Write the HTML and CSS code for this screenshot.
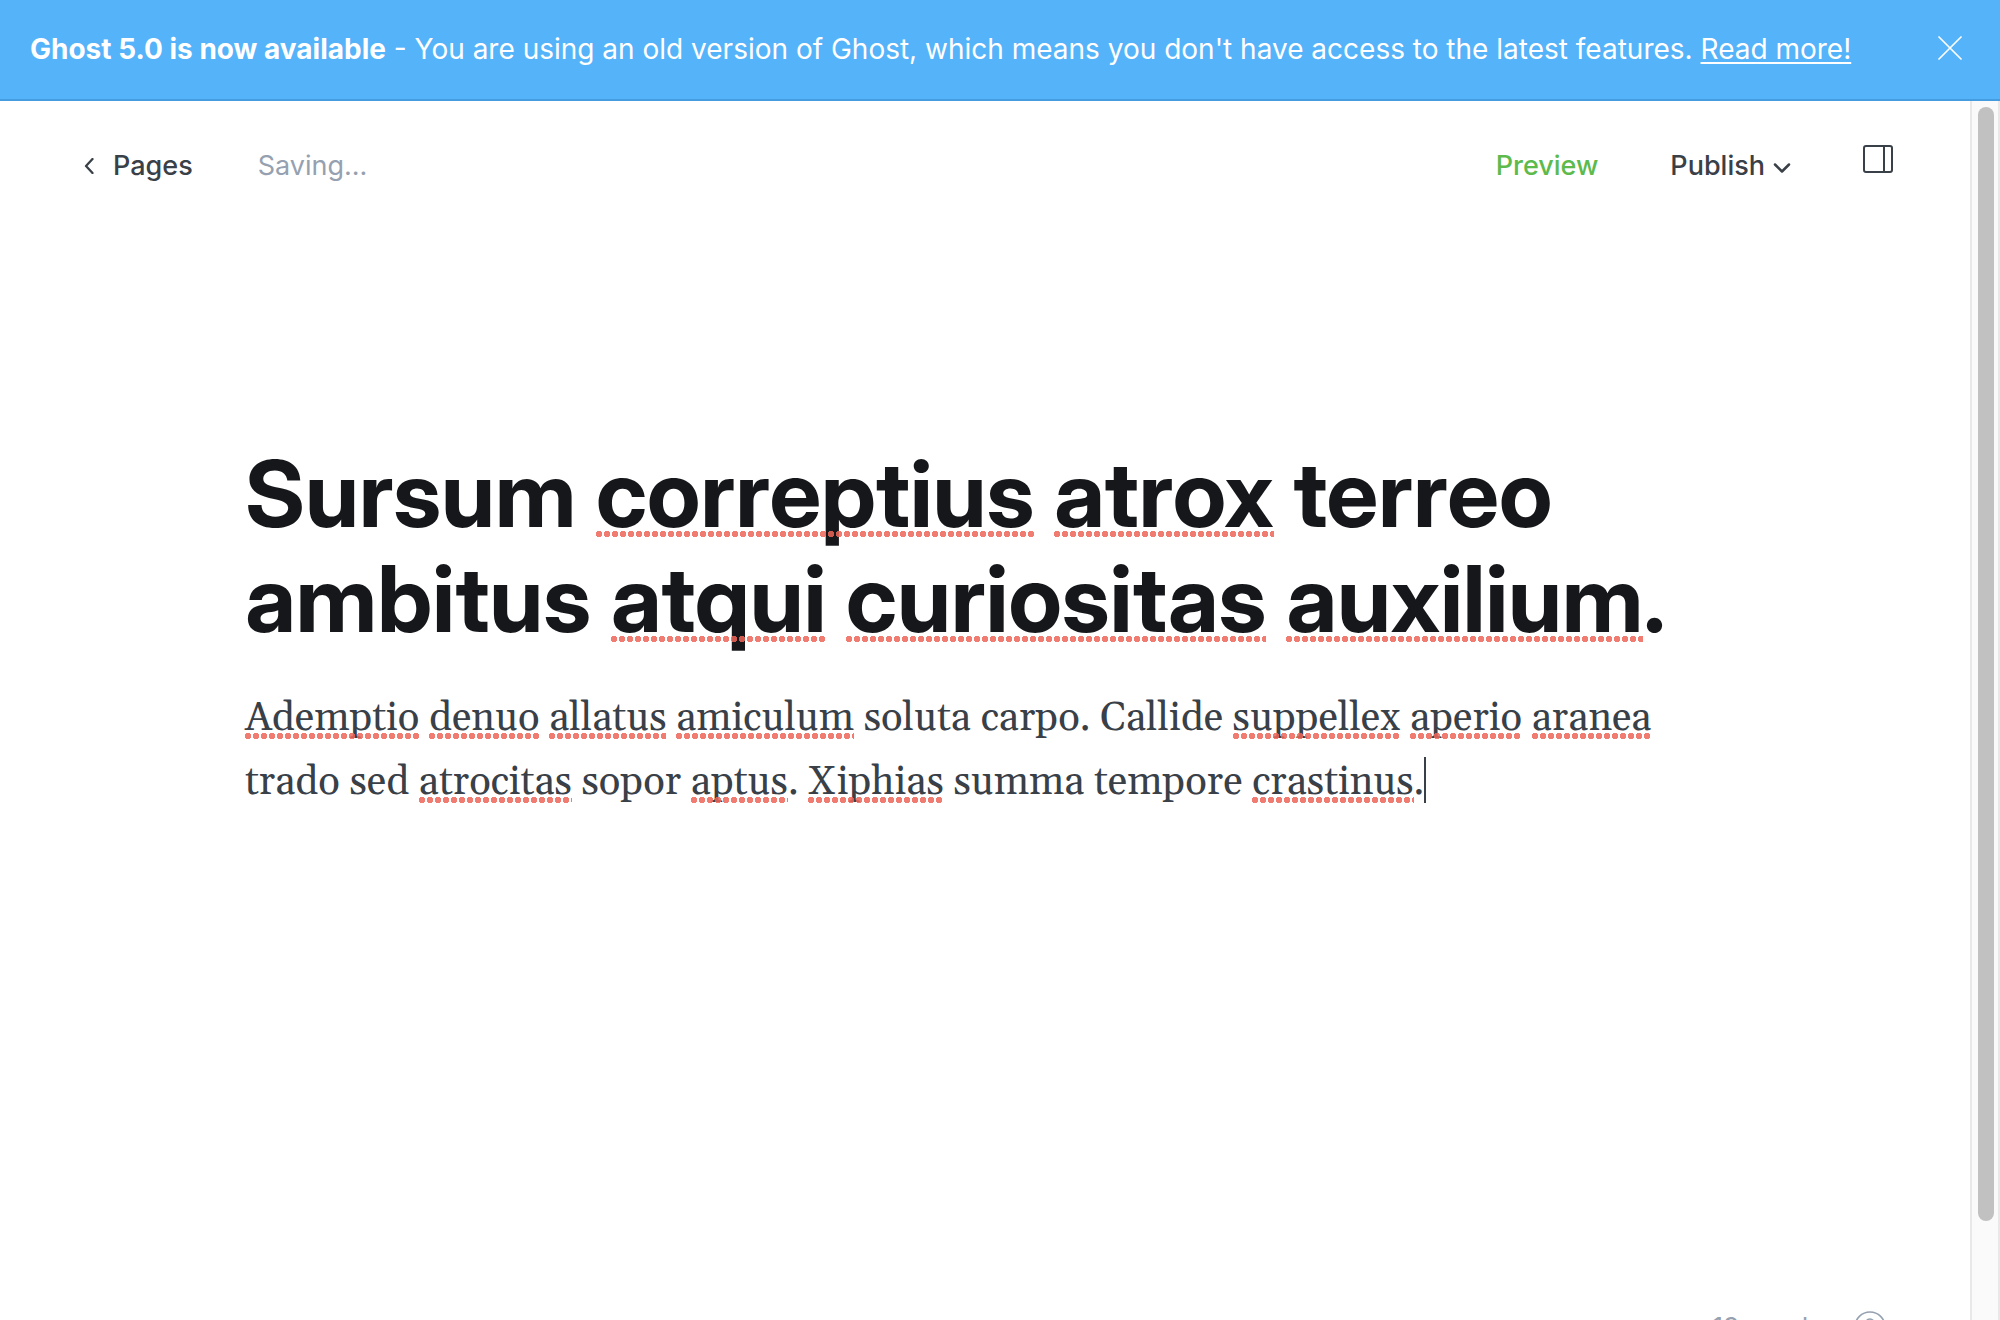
FILE: index.html
```html
<!DOCTYPE html>
<html lang="en">
<head>
<meta charset="utf-8">
<title>Page editor</title>
<link rel="stylesheet" href="styles.css">
</head>
<body>
<aside class="banner">
  <p class="banner-text"><strong>Ghost 5.0 is now available</strong> - You are using an old version of Ghost, which means you don't have access to the latest features. <a class="banner-link" href="#">Read more!</a></p>
  <button class="icon-button" type="button" aria-label="Close">
    <svg width="24" height="24" viewBox="0 0 24 24" fill="none" stroke="currentColor" stroke-width="1.7" stroke-linecap="round"><path d="M1 1l22 22M23 1L1 23"/></svg>
  </button>
</aside>
<div class="workspace">
  <main class="editor">
    <header class="toolbar">
      <a class="back" href="#">
        <svg width="10" height="16" viewBox="0 0 10 16" fill="none" stroke="currentColor" stroke-width="2.3" stroke-linecap="round" stroke-linejoin="round"><path d="M8.500 1L2 8l6.500 7"/></svg>
        Pages
      </a>
      <span class="status">Saving...</span>
      <nav class="actions">
        <button class="preview" type="button">Preview</button>
        <button class="publish" type="button">Publish
          <svg class="caret-icon" width="18" height="10" viewBox="0 0 18 10" fill="none" stroke="currentColor" stroke-width="2.500" stroke-linecap="round" stroke-linejoin="round"><path d="M2 1.500l7 7 7-7"/></svg>
        </button>
        <button class="icon-button settings" type="button" aria-label="Settings">
          <svg width="30" height="28" viewBox="0 0 30 28" fill="none" stroke="currentColor" stroke-width="2"><rect x="1" y="1" width="28" height="26" rx="2"/><path d="M21 1v26"/></svg>
        </button>
      </nav>
    </header>
    <article class="post">
      <h1 class="title">Sursum <span class="typo">correptius</span> <span class="typo">atrox</span> terreo<br>ambitus <span class="typo">atqui</span> <span class="typo">curiositas</span> <span class="typo">auxilium</span>.</h1>
      <p class="body-text"><span class="typo">Ademptio</span> <span class="typo">denuo</span> <span class="typo">allatus</span> <span class="typo">amiculum</span> soluta carpo. Callide <span class="typo">suppellex</span> <span class="typo">aperio</span> <span class="typo">aranea</span><br>trado sed <span class="typo">atrocitas</span> sopor <span class="typo">aptus</span>. <span class="typo">Xiphias</span> summa tempore <span class="typo">crastinus</span>.<span class="text-caret"></span></p>
    </article>
    <footer class="footer">
      <span>19 words</span>
      <svg width="32" height="32" viewBox="0 0 32 32" fill="none" stroke="currentColor" stroke-width="1.600" stroke-linecap="round"><circle cx="16" cy="16" r="15"/><path d="M12 12a4 4 0 1 1 6 3.500c-1.500 1-2 1.500-2 3.500M16 23v.2"/></svg>
    </footer>
  </main>
  <div class="scrollbar"><div class="thumb"></div></div>
</div>
</body>
</html>
```

FILE: styles.css
```css
* { box-sizing: border-box; }

body {
  margin: 0;
  height: 100vh;
  overflow: hidden;
  display: flex;
  flex-direction: column;
  background: #fff;
  color: #394047;
  font: 400 28px/40px Inter, "Liberation Sans", sans-serif;
}

button {
  margin: 0;
  padding: 0;
  border: 0;
  background: none;
  color: inherit;
  font: inherit;
}

svg { display: block; }

.banner {
  flex: none;
  display: flex;
  align-items: flex-start;
  justify-content: space-between;
  padding: 29px 38px 30px 30px;
  border-bottom: 2px solid #459cdf;
  background: #54b3f9;
  color: #fff;
}

.banner-text { margin: 0; white-space: nowrap; }
.banner-text strong { font-weight: 700; }
.banner .icon-button { padding-top: 7px; }

.banner-link {
  color: inherit;
  text-decoration: underline;
  text-decoration-thickness: 2px;
  text-underline-offset: 3px;
}

.workspace {
  flex: none;
  display: flex;
  height: 100vh;
}

.editor {
  flex: 1;
  display: flex;
  flex-direction: column;
}

.toolbar {
  display: flex;
  align-items: center;
  padding: 44px 77px 0 84px;
  font-size: 27px;
  line-height: 42px;
}

.back {
  display: flex;
  align-items: center;
  gap: 19px;
  color: inherit;
  font-weight: 500;
  text-decoration: none;
}

.status { margin-left: 65px; color: #95a1b0; }

.actions {
  display: flex;
  align-items: center;
  gap: 72px;
  margin-left: auto;
  font-weight: 500;
}

.preview { color: #5dba4c; }

.publish {
  display: flex;
  align-items: center;
  gap: 8px;
}

.caret-icon { margin-top: 4px; }
.settings { align-self: flex-start; }

.post {
  flex: 1;
  width: 100%;
  max-width: 1480px;
  margin: 0 auto;
  padding-top: 254px;
}

.title {
  margin: 0;
  color: #15171a;
  font-family: "Inter Display", Inter, "Liberation Sans", sans-serif;
  font-size: 92px;
  font-variation-settings: "opsz" 32;
  line-height: 105px;
  font-weight: 700;
  white-space: nowrap;
}

.body-text {
  margin: 36px 0 0;
  font: 40px/64px Georgia, Gelasio, "Liberation Serif", serif;
  white-space: nowrap;
}

.typo { position: relative; }

.typo::after {
  content: "";
  position: absolute;
  left: 0;
  right: 0;
  bottom: 12px;
  height: 6px;
  background: radial-gradient(circle at 3px 3px, #ee6558d9 3px, transparent 3px) 0 0 / 8px 6px;
}

.body-text .typo::after { bottom: 5px; }

.text-caret {
  display: inline-block;
  width: 2px;
  height: 46px;
  background: #394047;
  vertical-align: -9px;
}

.footer {
  display: flex;
  align-items: center;
  justify-content: flex-end;
  gap: 32px;
  padding: 0 84px 78px;
  color: #95a1b0;
  font-size: 26px;
  line-height: 32px;
}

.scrollbar {
  flex: none;
  width: 30px;
  padding: 6px;
  border: solid #e8e8e8;
  border-width: 0 2px;
  background: #fafafa;
}

.thumb {
  width: 16px;
  height: 85.2%;
  border-radius: 8px;
  background: #c1c1c1;
}
```
